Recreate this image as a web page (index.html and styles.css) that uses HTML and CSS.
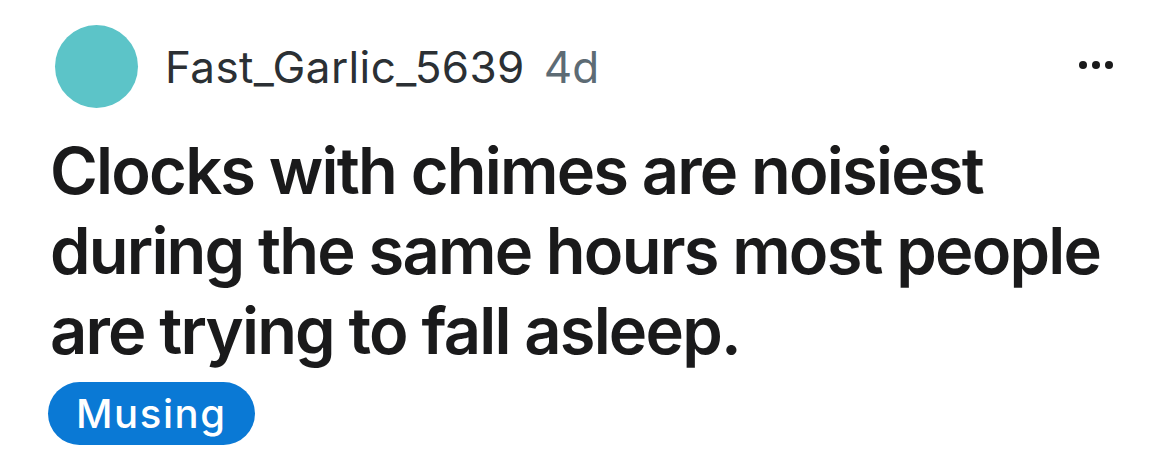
FILE: index.html
```html
<!DOCTYPE html>
<html>
<head>
<meta charset="utf-8">
<link rel="stylesheet" href="styles.css">
</head>
<body>
<div class="post">
  <div class="header">
    <div class="avatar"></div>
    <span class="user">Fast_Garlic_5639</span>
    <span class="age">4d</span>
    <div class="more"><span></span><span></span><span></span></div>
  </div>
  <h1 class="title">Clocks with chimes are noisiest during the same hours most people are trying to fall asleep.</h1>
  <span class="flair">Musing</span>
</div>
</body>
</html>
```
FILE: styles.css
```css
html, body {
  margin: 0;
  padding: 0;
  background: #ffffff;
}
.post {
  width: 1170px;
  height: 467px;
  box-sizing: border-box;
  padding: 25px 0 0 50px;
  font-family: Inter, "Noto Sans", sans-serif;
}
.header {
  display: flex;
  align-items: center;
  margin-left: 5px;
  height: 83px;
}
.avatar {
  width: 83px;
  height: 83px;
  border-radius: 50%;
  background: #5cc4c8;
  flex: none;
}
.user {
  margin-left: 27px;
  font-size: 44px;
  letter-spacing: 0.4px;
  color: #2b3034;
  font-weight: 400;
}
.age {
  margin-left: 19px;
  font-size: 44px;
  color: #5d6b74;
}
.more {
  margin-left: auto;
  margin-right: 57px;
  display: flex;
  gap: 5px;
  align-self: flex-start;
  margin-top: 36px;
}
.more span {
  width: 8px;
  height: 8px;
  border-radius: 50%;
  background: #1a1a1b;
}
.title {
  margin: 23px 0 0 0;
  font-size: 65px;
  line-height: 80px;
  font-weight: 600;
  letter-spacing: -1.8px;
  color: #1a1a1b;
  width: 1080px;
}
.flair {
  display: inline-flex;
  align-items: center;
  margin-top: 11px;
  margin-left: -2px;
  height: 63px;
  padding: 0 28px;
  border-radius: 32px;
  background: #0a79d5;
  color: #ffffff;
  font-size: 40px;
  letter-spacing: 1.6px;
  font-weight: 500;
}
```
